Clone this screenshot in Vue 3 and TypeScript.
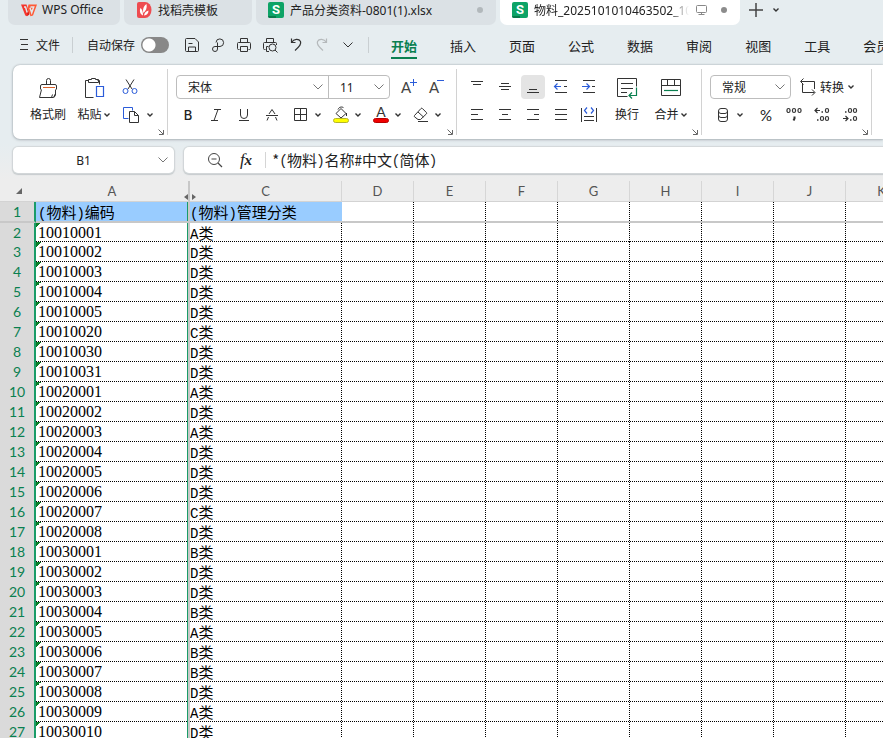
<script setup lang="ts">
import { h, ref } from 'vue'

interface IconDef {
  w: number
  h: number
  body: string
}

const icons: Record<string, IconDef> = {
  wps: {
    w: 18,
    h: 14,
    body: '<path d="M1 1.500h5.500l3 9.500L7 13.200 5.300 12.500Z" fill="#f5352c" stroke="none"/><path d="M7 4.500 9.200 11.500 7.500 13Z" fill="#d81e18" stroke="none"/><path d="M8.500 1.500H17L13 12.500l-2.500.7L7.500 5.500" fill="#ff5a36" stroke="none"/><path d="M4 4h1.500l1.700 5.500M10.500 4h3.200l-2 5.800-1.700-5" stroke="#e2e7ea" stroke-width="1.500"/>',
  },
  docer: {
    w: 16,
    h: 16,
    body: '<path d="M3 0h6a6.500 8 0 0 1 0 16H3a2 2 0 0 1-2-2V2a2 2 0 0 1 2-2Z" fill="#ee4b50" stroke="none"/><path d="M7 13.500C3.500 12 3.500 8 4.500 6c1.800 1.500 2.500 4 2.500 7.500ZM7.300 11C6.500 7 8 3.500 10.500 2c.8 4-.5 7-3.200 9ZM8 13.500c.3-2.500 2-4.500 4.500-5 0 3-1.500 4.800-4.500 5Z" fill="#fff" stroke="none"/>',
  },
  sheet: {
    w: 16,
    h: 16,
    body: '<rect width="16" height="16" rx="2" fill="#0da366" stroke="none"/><path d="M0 14h8v2H2a2 2 0 0 1-2-2Z" fill="#087a4b" stroke="none"/><text x="8" y="12" text-anchor="middle" font-family="Roboto, sans-serif" font-weight="700" font-size="13" fill="#fff" stroke="none">S</text>',
  },
  monitor: { w: 14, h: 12, body: '<rect x="1.500" y="1.500" width="10" height="7" rx="1" stroke="#888"/><path d="M6.500 8.500v2M3.500 10.500h6" stroke="#888"/>' },
  plus: { w: 16, h: 16, body: '<path d="M8 1v14M1 8h14" stroke="#444" stroke-width="1.500"/>' },
  chevron: { w: 8, h: 6, body: '<path d="m1.500 1.500 2.500 2.500 2.500-2.500" stroke="#333" stroke-width="1.400"/>' },
  chevronWide: { w: 10, h: 6, body: '<path d="m.5.5 4.500 4.500L9.500.5" stroke="#777"/>' },
  chevronDark: { w: 10, h: 6, body: '<path d="m.5.5 4.500 4.500L9.500.5" stroke="#333"/>' },
  menu: { w: 12, h: 12, body: '<path d="M2 .5h8M3 5.500h7M2 10.500h8" stroke="#333"/>' },
  save: { w: 16, h: 16, body: '<path d="M2.500 1.500h8.500l3.500 3.500v8.500a1 1 0 0 1-1 1h-11a1 1 0 0 1-1-1v-11a1 1 0 0 1 1-1ZM4.500 14.500v-4.500h7v4.500M4.500 6.500h4" />' },
  pdf: { w: 16, h: 16, body: '<path d="M6 5.500a3.800 3.800 0 1 1 4 4H5a2.500 2.500 0 1 0 2.500 2.500V5.500"/>' },
  print: { w: 16, h: 16, body: '<path d="M4.500 5.500v-4h7v4M3.500 12.500h-1a1 1 0 0 1-1-1v-5a1 1 0 0 1 1-1h11a1 1 0 0 1 1 1v5a1 1 0 0 1-1 1h-1M4.500 9.500h7v5h-7Z"/>' },
  preview: { w: 16, h: 16, body: '<path d="M4.500 5.500v-4h7v4M3.500 12.500h-1a1 1 0 0 1-1-1v-5a1 1 0 0 1 1-1h11a1 1 0 0 1 1 1V8M4.500 9.500V14.500h2.500M4.500 9.500h2"/><circle cx="10.500" cy="10.500" r="3.500"/><path d="m13 13 2.500 2.500"/>' },
  undo: { w: 16, h: 16, body: '<path d="M3.500 1.500v4h4M3.500 5.500C6 1.500 11 1.500 12.500 4.500c1 2.500-.5 4.500-5.500 9" stroke-width="1.200"/>' },
  redo: { w: 16, h: 16, body: '<path d="M12.500 1.500v4h-4M12.500 5.500C10 1.500 5 1.500 3.500 4.500c-1 2.500.5 4.500 5.500 9" stroke="#b5b9bb" stroke-width="1.200"/>' },
  painter: { w: 20, h: 22, body: '<path d="M8.500 7.500V3.500a2 2 0 0 1 4 0v4M2.500 12.500V9a1.500 1.500 0 0 1 1.500-1.500h13A1.500 1.500 0 0 1 18.500 9v3.500M3.500 12.500 1.500 20.500h14l2-4M17.500 12.500v5.500l-1.500 2.500M13.500 20.500l1-3"/><path d="M5 10.500h12" stroke="#d9622b"/>' },
  paste: { w: 22, h: 22, body: '<path d="M5.500 3.500h-3v17h8M14.500 3.500h2v4M5.500 5.500v-3h3v-1h4v1h3v3Z"/><path d="M13.500 9.500h7v10h-7Z" stroke="#2b5cd9" stroke-width="1.200"/>' },
  cut: { w: 18, h: 18, body: '<path d="M5 1.500 11 11M13 1.500 7 11"/><circle cx="4.500" cy="13" r="2.500" stroke="#2b5cd9"/><circle cx="13.500" cy="13" r="2.500" stroke="#2b5cd9"/>' },
  copy: { w: 18, h: 18, body: '<path d="M6.500 12.500h-5v-11h9v3" stroke="#2b5cd9"/><path d="M7.500 5.500h5l4 4v7h-9ZM12.500 5.500v4h4"/>' },
  growFont: { w: 18, h: 18, body: '<text x="1" y="15" font-family="Lato, sans-serif" font-size="15" fill="#444" stroke="none">A</text><path d="M13.500 1v7M10 4.500h7" stroke="#2b5cd9"/>' },
  shrinkFont: { w: 18, h: 18, body: '<text x="1" y="15" font-family="Lato, sans-serif" font-size="15" fill="#444" stroke="none">A</text><path d="M9 2.500h7" stroke="#2b5cd9"/>' },
  italic: { w: 16, h: 16, body: '<path d="M6 2.500h7M3 13.500h7M10 2.500 6 13.500"/>' },
  underline: { w: 16, h: 16, body: '<path d="M4.500 2v6a3.500 3.500 0 0 0 7 0V2M3 13.500h10"/>' },
  strike: { w: 16, h: 16, body: '<path d="M5 7 8 2.500 11 7M2 8.500h12M4.500 10 3 13.500M11.500 10l1.500 3.500"/>' },
  borders: { w: 16, h: 16, body: '<path d="M1.500 1.500h12v12h-12ZM7.500 1.500v12M1.500 7.500h12"/>' },
  fill: { w: 18, h: 18, body: '<path d="m4 7.500 5-5 5 5-5 4.500ZM6 3.500C7 .5 11 .5 11.500 2M14.500 7v3"/><rect x="1.500" y="12.500" width="15" height="4" rx="2" fill="#ff0" stroke="#b5b52a"/>' },
  fontColor: { w: 18, h: 18, body: '<text x="9" y="11" text-anchor="middle" font-family="Lato, sans-serif" font-size="14" fill="#333" stroke="none">A</text><rect x="1.500" y="12.500" width="15" height="4" rx="2" fill="#f00000" stroke="#b80000"/>' },
  eraser: { w: 18, h: 18, body: '<path d="M2.500 9.500 9 2.500a1 1 0 0 1 1.400 0l4 4a1 1 0 0 1 0 1.400L8.500 13.500H6L2.500 10.800a1 1 0 0 1 0-1.300ZM6 6l5.500 5M6 15.500h10"/>' },
  alignTop: { w: 16, h: 16, body: '<path d="M2 2.500h12M4 5.500h8" stroke-width="1.100"/>' },
  alignMiddle: { w: 16, h: 16, body: '<path d="M4 4.500h8M2 7.500h12M4 10.500h8" stroke-width="1.100"/>' },
  alignBottom: { w: 16, h: 16, body: '<path d="M4 10.500h8M2 13.500h12" stroke-width="1.100"/>' },
  outdent: { w: 16, h: 16, body: '<path d="M2 1.500h12M11 7.500h3M2 13.500h12"/><path d="M8 7.500H1.500M4.500 4.500l-3 3 3 3" stroke="#2b5cd9" stroke-width="1.200"/>' },
  indent: { w: 16, h: 16, body: '<path d="M2 1.500h12M11 7.500h3M2 13.500h12"/><path d="M1 7.500h7M5.500 4.500l3 3-3 3" stroke="#2b5cd9" stroke-width="1.200"/>' },
  alignLeft: { w: 16, h: 16, body: '<path d="M2 2.500h12M2 7.500h7M2 12.500h12"/>' },
  alignCenter: { w: 16, h: 16, body: '<path d="M2 2.500h12M5 7.500h6M2 12.500h12"/>' },
  alignRight: { w: 16, h: 16, body: '<path d="M2 2.500h12M9 7.500h5M2 12.500h12"/>' },
  justify: { w: 16, h: 16, body: '<path d="M2 2.500h12M2 7.500h12M2 12.500h12"/>' },
  distribute: { w: 18, h: 18, body: '<path d="M1.500 2v14M16.500 2v14M4 10.500h10M4 14.500h10"/><path d="m7 1.500-2.500 3 2.500 3M11 1.500l2.500 3-2.500 3" stroke="#2b5cd9" stroke-width="1.200"/>' },
  wrap: { w: 22, h: 22, body: '<path d="M20.500 9.500v-8h-19v18h10M5 6.500h12M5 11.500h12M5 15.500h6"/><path d="M20.500 10.500v8h-7M16 15.500l-3 3 3 3" stroke="#0a8050" stroke-width="1.200"/>' },
  merge: { w: 22, h: 22, body: '<path d="M1.500 2.500h19v16h-19ZM1.500 8.500h19M7.500 2.500v6M14.500 2.500v6"/><path d="M4 13.500h14" stroke="#0a8050" stroke-width="1.200"/>' },
  convert: { w: 18, h: 18, body: '<path d="M3.500 6v8.500h12M13 11.500l3 3-3 3M15.500 11V3.500H2M4.500.5l-3 3 3 3"/>' },
  currency: { w: 14, h: 16, body: '<rect x="2.500" y="1.500" width="9" height="5" rx="2.500"/><path d="M2.500 4v4a2.500 2.500 0 0 0 2.500 2.500h4A2.500 2.500 0 0 0 11.500 8V4M2.500 8v4A2.500 2.500 0 0 0 5 14.500h4a2.500 2.500 0 0 0 2.500-2.500V8"/>' },
  thousands: { w: 18, h: 18, body: '<g stroke-width="1.200"><rect x="2" y="2.500" width="3" height="4" rx="1.500"/><rect x="7.500" y="2.500" width="3" height="4" rx="1.500"/><rect x="13" y="2.500" width="3" height="4" rx="1.500"/><path d="M9.500 10.500v2l-1 2" stroke-width="2"/></g>' },
  addDecimal: { w: 18, h: 18, body: '<g stroke-width="1.200"><path d="M7 4.500H2M4.500 2l-2.500 2.500L4.500 7"/><path d="M8.500 6h1.500M4 14h1.500" stroke-width="1.500"/><rect x="12.500" y="2.500" width="3" height="4" rx="1.500"/><rect x="7.500" y="10.500" width="3" height="4" rx="1.500"/><rect x="12.500" y="10.500" width="3" height="4" rx="1.500"/></g>' },
  dropDecimal: { w: 18, h: 18, body: '<g stroke-width="1.200"><path d="M2 12.500h5M4.500 10l2.500 2.500L4.500 15"/><path d="M4 6h1.500M9 14h1.500" stroke-width="1.500"/><rect x="7.500" y="2.500" width="3" height="4" rx="1.500"/><rect x="12.500" y="2.500" width="3" height="4" rx="1.500"/><rect x="12.500" y="10.500" width="3" height="4" rx="1.500"/></g>' },
  launcher: { w: 6, h: 6, body: '<path d="M.5.5l4.500 4.500M5.500 1v4.500H1" stroke="#666"/>' },
  zoomOut: { w: 16, h: 16, body: '<circle cx="7" cy="7" r="5.500" stroke="#444"/><path d="M4.500 7h5M11 11l4 4" stroke="#444" stroke-width="1.200"/>' },
  corner: { w: 6, h: 6, body: '<path d="M6 0v6H0Z" fill="#666" stroke="none"/>' },
  resize: { w: 12, h: 6, body: '<path d="M4 0v6L0 3ZM8 0v6l4-3Z" fill="#666" stroke="none"/>' },
}

const Icon = (props: { name: string }) => {
  const d = icons[props.name]
  return h('svg', {
    class: 'icon',
    width: d.w,
    height: d.h,
    viewBox: `0 0 ${d.w} ${d.h}`,
    fill: 'none',
    stroke: '#333',
    'aria-hidden': 'true',
    innerHTML: d.body,
  })
}
Icon.props = ['name']

const quickActions = [
  { icon: 'save', label: '保存' },
  { icon: 'pdf', label: '输出为PDF' },
  { icon: 'print', label: '打印' },
  { icon: 'preview', label: '打印预览' },
  { icon: 'undo', label: '撤销' },
  { icon: 'redo', label: '恢复' },
  { icon: 'chevronDark', label: '更多' },
]
const menus = ['开始', '插入', '页面', '公式', '数据', '审阅', '视图', '工具', '会员']
const activeMenu = ref('开始')
const autoSave = ref(false)

const fontSplits = [
  { icon: 'borders', label: '边框' },
  { icon: 'fill', label: '填充颜色' },
  { icon: 'fontColor', label: '字体颜色' },
  { icon: 'eraser', label: '清除' },
]
const verticalAligns = [
  { icon: 'alignTop', label: '顶端对齐' },
  { icon: 'alignMiddle', label: '垂直居中' },
  { icon: 'alignBottom', label: '底端对齐' },
  { icon: 'outdent', label: '减少缩进' },
  { icon: 'indent', label: '增加缩进' },
]
const horizontalAligns = [
  { icon: 'alignLeft', label: '左对齐' },
  { icon: 'alignCenter', label: '水平居中' },
  { icon: 'alignRight', label: '右对齐' },
  { icon: 'justify', label: '两端对齐' },
  { icon: 'distribute', label: '分散对齐' },
]

const fontName = ref('宋体')
const fontSize = ref('11')
const numberFormat = ref('常规')
const cellName = ref('B1')
const formula = ref('*(物料)名称#中文(简体)')

const emptyColumns = ['D', 'E', 'F', 'G', 'H', 'I', 'J', 'K']
const records: [string, string][] = [
  ['10010001', 'A'], ['10010002', 'D'], ['10010003', 'D'], ['10010004', 'D'],
  ['10010005', 'D'], ['10010020', 'C'], ['10010030', 'D'], ['10010031', 'D'],
  ['10020001', 'A'], ['10020002', 'D'], ['10020003', 'A'], ['10020004', 'D'],
  ['10020005', 'D'], ['10020006', 'D'], ['10020007', 'C'], ['10020008', 'D'],
  ['10030001', 'B'], ['10030002', 'D'], ['10030003', 'D'], ['10030004', 'B'],
  ['10030005', 'A'], ['10030006', 'B'], ['10030007', 'B'], ['10030008', 'D'],
  ['10030009', 'A'], ['10030010', 'D'],
]
</script>

<template>
  <div class="app">
    <nav class="tabs" aria-label="文档">
      <button class="tab tab-home"><Icon name="wps" /><span>WPS Office</span></button>
      <button class="tab tab-docer"><Icon name="docer" /><span>找稻壳模板</span></button>
      <button class="tab tab-doc">
        <Icon name="sheet" /><span class="tab-title">产品分类资料-0801(1).xlsx</span><i class="dot"></i>
      </button>
      <button class="tab tab-doc active">
        <Icon name="sheet" /><span class="tab-title fade">物料_2025101010463502_10</span><Icon name="monitor" /><i class="dot"></i>
      </button>
      <button class="new-tab" aria-label="新建"><Icon name="plus" /></button>
      <button class="tab-list" aria-label="标签列表"><Icon name="chevron" /></button>
    </nav>

    <div class="menubar">
      <button class="file"><Icon name="menu" />文件</button>
      <span class="rule"></span>
      <label class="autosave">自动保存<input v-model="autoSave" type="checkbox" role="switch" class="switch" /></label>
      <div class="quick">
        <button v-for="a in quickActions" :key="a.icon" :aria-label="a.label"><Icon :name="a.icon" /></button>
      </div>
      <span class="rule"></span>
      <nav class="menus" aria-label="功能区">
        <button v-for="m in menus" :key="m" :class="{ current: m === activeMenu }" @click="activeMenu = m">{{ m }}</button>
      </nav>
    </div>

    <section class="ribbon">
      <div class="group clipboard">
        <button class="big painter"><Icon name="painter" /><span>格式刷</span></button>
        <button class="big paste"><Icon name="paste" /><span>粘贴<Icon name="chevron" /></span></button>
        <div class="stack">
          <button class="tool" aria-label="剪切"><Icon name="cut" /></button>
          <button class="split" aria-label="复制"><span class="face"><Icon name="copy" /></span><Icon name="chevron" /></button>
        </div>
        <button class="launcher" aria-label="剪贴板设置"><Icon name="launcher" /></button>
      </div>

      <div class="group font">
        <div class="stack">
          <div class="line">
            <div class="combo">
              <span class="pick name">
                <select v-model="fontName" aria-label="字体"><option>宋体</option></select><Icon name="chevronWide" />
              </span>
              <span class="pick size">
                <select v-model="fontSize" aria-label="字号"><option>11</option></select><Icon name="chevronWide" />
              </span>
            </div>
            <button class="tool" aria-label="增大字号"><Icon name="growFont" /></button>
            <button class="tool" aria-label="减小字号"><Icon name="shrinkFont" /></button>
          </div>
          <div class="line styles">
            <button class="tool bold" aria-label="加粗">B</button>
            <button class="tool" aria-label="倾斜"><Icon name="italic" /></button>
            <button class="tool" aria-label="下划线"><Icon name="underline" /></button>
            <button class="tool" aria-label="删除线"><Icon name="strike" /></button>
            <div class="line splits">
              <button v-for="s in fontSplits" :key="s.icon" class="split" :aria-label="s.label">
                <span class="face"><Icon :name="s.icon" /></span><Icon name="chevron" />
              </button>
            </div>
          </div>
        </div>
        <button class="launcher" aria-label="字体设置"><Icon name="launcher" /></button>
      </div>

      <div class="group align">
        <div class="stack">
          <div class="line">
            <button v-for="a in verticalAligns" :key="a.icon" class="tool" :class="{ pressed: a.icon === 'alignBottom' }" :aria-label="a.label">
              <Icon :name="a.icon" />
            </button>
          </div>
          <div class="line">
            <button v-for="a in horizontalAligns" :key="a.icon" class="tool" :aria-label="a.label"><Icon :name="a.icon" /></button>
          </div>
        </div>
        <button class="big wrap"><Icon name="wrap" /><span>换行</span></button>
        <button class="big merge"><Icon name="merge" /><span>合并<Icon name="chevron" /></span></button>
        <button class="launcher" aria-label="对齐设置"><Icon name="launcher" /></button>
      </div>

      <div class="group number">
        <div class="stack">
          <div class="line">
            <div class="combo format">
              <span class="pick">
                <select v-model="numberFormat" aria-label="数字格式"><option>常规</option></select><Icon name="chevronWide" />
              </span>
            </div>
            <button class="convert"><Icon name="convert" />转换<Icon name="chevron" /></button>
          </div>
          <div class="line">
            <button class="split" aria-label="货币"><span class="face"><Icon name="currency" /></span><Icon name="chevron" /></button>
            <div class="line numbers">
              <button class="tool percent" aria-label="百分比">%</button>
              <button class="tool" aria-label="千位分隔"><Icon name="thousands" /></button>
              <button class="tool" aria-label="增加小数位"><Icon name="addDecimal" /></button>
              <button class="tool" aria-label="减少小数位"><Icon name="dropDecimal" /></button>
            </div>
          </div>
        </div>
        <button class="launcher" aria-label="数字设置"><Icon name="launcher" /></button>
      </div>
    </section>

    <div class="formula-row">
      <div class="namebox">
        <input v-model="cellName" aria-label="名称框" /><button aria-label="名称列表"><Icon name="chevronWide" /></button>
      </div>
      <div class="formula">
        <button aria-label="缩小"><Icon name="zoomOut" /></button>
        <button class="fx" aria-label="插入函数">f<b>x</b></button>
        <input v-model="formula" aria-label="编辑栏" />
      </div>
    </div>

    <div class="sheet">
      <table>
        <colgroup>
          <col class="w-head" /><col class="w-a" /><col class="w-c" />
          <col v-for="c in emptyColumns" :key="c" class="w-x" />
        </colgroup>
        <thead>
          <tr>
            <th class="corner"><Icon name="corner" /></th>
            <th class="col-a">A<span class="handle"><Icon name="resize" /></span></th>
            <th>C</th>
            <th v-for="c in emptyColumns" :key="c">{{ c }}</th>
          </tr>
        </thead>
        <tbody>
          <tr class="titles">
            <th scope="row">1</th>
            <td class="a"><span class="half">(</span>物料<span class="half">)</span>编码</td>
            <td class="c"><span class="half">(</span>物料<span class="half">)</span>管理分类</td>
            <td v-for="c in emptyColumns" :key="c" class="x"></td>
          </tr>
          <tr v-for="(r, i) in records" :key="r[0]" :class="{ first: i === 0 }">
            <th scope="row">{{ i + 2 }}</th>
            <td class="a code">{{ r[0] }}</td>
            <td class="c"><span class="half">{{ r[1] }}</span>类</td>
            <td v-for="c in emptyColumns" :key="c" class="x"></td>
          </tr>
        </tbody>
      </table>
    </div>
  </div>
</template>

<style>
body {
  background: #e6edf0;
  overflow: hidden;
}
.icon {
  display: block;
  flex: none;
}
</style>

<style scoped>
.app {
  height: 100vh;
  overflow: hidden;
  display: flex;
  flex-direction: column;
  font-family: "Noto Sans", "Noto Sans CJK SC", sans-serif;
  font-size: 12px;
  color: #222;
  background: linear-gradient(#e6edf0 0, #e6edf0 144px, #ededed 180px);
}
button,
input,
select {
  font: inherit;
  color: inherit;
  border: 0;
  background: none;
  padding: 0;
  margin: 0;
  min-width: 0;
  outline: none;
  appearance: none;
}
button {
  display: flex;
  align-items: center;
  justify-content: center;
  white-space: nowrap;
}

/* document tabs */
.tabs {
  display: flex;
  flex: none;
  gap: 4px;
  height: 25px;
  padding-left: 8px;
}
.tab {
  flex: none;
  justify-content: flex-start;
  gap: 6px;
  padding: 0 12px 6px;
  background: #dbe1e5;
  border-radius: 0 0 7px 7px;
}
.tab-home {
  width: 112px;
  gap: 4px;
}
.tab-docer {
  width: 128px;
}
.tab-doc {
  width: 240px;
}
.tab-title {
  flex: 1;
  text-align: left;
  overflow: hidden;
}
.tab.active {
  background: #fff;
}
.fade {
  mask-image: linear-gradient(90deg, #000 88%, transparent);
}
.dot {
  width: 6px;
  height: 6px;
  margin-right: 1px;
  border-radius: 50%;
  background: #b2b8bb;
}
.active .dot {
  margin-left: 6px;
  background: #8c8c8c;
}
.new-tab {
  padding: 0 4px 5px;
}
.tab-list {
  padding-bottom: 5px;
}

/* menu bar */
.menubar {
  display: flex;
  flex: none;
  align-items: center;
  height: 40px;
  padding-left: 18px;
  white-space: nowrap;
}
.menubar > * {
  flex: none;
}
.file {
  gap: 6px;
}
.rule {
  width: 1px;
  height: 16px;
  margin: 0 14px 0 12px;
  background: #c9cfd2;
}
.autosave {
  display: flex;
  align-items: center;
  gap: 6px;
}
.switch {
  width: 28px;
  height: 16px;
  border-radius: 8px;
  background: radial-gradient(circle at 8px 8px, #fff 6px, #888 7px);
}
.switch:checked {
  background: radial-gradient(circle at 20px 8px, #fff 6px, #0a8050 7px);
}
.quick {
  display: flex;
  margin-left: 10px;
}
.quick button {
  width: 26px;
  height: 26px;
}
.quick + .rule {
  margin: 0 22px 0 7px;
}
.menus {
  display: flex;
  gap: 33px;
  font-size: 13px;
}
.menus button {
  flex: none;
  height: 28px;
  border-bottom: 2px solid transparent;
  border-top: 2px solid transparent;
}
.menus .current {
  color: #0a8050;
  font-weight: 700;
  border-bottom-color: #0a8050;
}

/* ribbon */
.ribbon {
  display: flex;
  flex: none;
  height: 74px;
  margin-left: 13px;
  background: #fff;
  border-radius: 7px 0 0 7px;
  box-shadow: 0 0 2px #9aa3a8, 0 1px 3px #b8bfc3;
}
.group {
  position: relative;
  display: flex;
  flex: none;
  padding-top: 8px;
}
.group::after {
  content: "";
  position: absolute;
  top: 4px;
  bottom: 4px;
  right: 0;
  width: 1px;
  background: #d2d2d2;
}
.clipboard {
  padding-left: 11px;
  padding-right: 12px;
}
.font {
  padding-left: 6px;
  padding-right: 6px;
}
.align {
  padding-left: 6px;
  padding-right: 11px;
  gap: 4px;
}
.number {
  padding-left: 8px;
  padding-right: 8px;
}
.launcher {
  position: absolute;
  right: 4px;
  bottom: 4px;
}
.stack {
  display: flex;
  flex-direction: column;
}
.line {
  display: flex;
  align-items: center;
  height: 28px;
}
.tool {
  width: 28px;
  height: 24px;
  border-radius: 4px;
}
.pressed {
  width: 24px;
  margin: 0 2px;
  background: #e4e4e4;
}
.split {
  justify-content: flex-start;
  width: 40px;
  height: 28px;
}
.face {
  display: flex;
  justify-content: center;
  width: 26px;
}
.splits,
.numbers {
  margin-left: 2px;
}
.big {
  flex-direction: column;
  justify-content: space-between;
  height: 56px;
  padding: 4px 0 5px;
  line-height: 18px;
}
.big span {
  display: flex;
  align-items: center;
  gap: 1px;
}
.painter {
  width: 48px;
}
.paste {
  width: 44px;
}
.wrap,
.merge {
  width: 40px;
}
.clipboard .tool,
.clipboard .split {
  height: 28px;
}
.clipboard .stack {
  width: 40px;
}
.clipboard .face {
  width: 30px;
}
.combo {
  display: flex;
  height: 24px;
  box-sizing: border-box;
  border: 1px solid #bdbdbd;
  border-radius: 4px;
}
.font .combo {
  width: 214px;
  margin: 0 5px 0 2px;
}
.pick {
  display: grid;
  align-items: center;
  flex: 1;
}
.pick > * {
  grid-area: 1 / 1;
}
.pick select {
  width: 100%;
  padding-left: 11px;
}
.pick .icon {
  justify-self: end;
  margin-right: 5px;
  pointer-events: none;
}
.pick.size {
  flex: none;
  width: 60px;
  border-left: 1px solid #bdbdbd;
}
.format {
  width: 81px;
}
.bold {
  font-family: Inter, sans-serif;
  font-size: 13px;
  font-weight: 500;
}
.percent {
  font-family: Lato, sans-serif;
  font-size: 15px;
}
.convert {
  gap: 3px;
  margin-left: 8px;
}

/* formula row */
.formula-row {
  display: flex;
  flex: none;
  gap: 10px;
  height: 26px;
  margin: 8px 0 8px 13px;
}
.namebox,
.formula {
  display: flex;
  align-items: center;
  background: #fff;
  border-radius: 5px;
  box-shadow: 0 0 1px 1px #d3d8da, 0 1px 1px 1px #c6cacc;
}
.namebox {
  width: 161px;
}
.namebox input {
  flex: 1;
  padding-left: 2px;
  text-align: center;
}
.namebox button {
  width: 22px;
}
.formula {
  flex: 1;
  padding-left: 23px;
  border-radius: 5px 0 0 5px;
}
.fx {
  width: 16px;
  margin: 0 11px 0 15px;
  font-family: "Liberation Serif", serif;
  font-style: italic;
  font-size: 17px;
}
.fx b {
  font-size: 15px;
}
.formula input {
  flex: 1;
  padding-left: 6px;
  height: 16px;
  line-height: 16px;
  border-left: 1px solid #d5d5d5;
  font-family: "Noto Sans Mono CJK SC", "Liberation Mono", "Noto Sans CJK SC", monospace;
  font-size: 15px;
}

/* grid */
.sheet {
  flex: 1;
  overflow: hidden;
}
table {
  width: 918px;
  table-layout: fixed;
  border-collapse: separate;
  border-spacing: 0;
}
.w-head {
  width: 36px;
}
.w-a {
  width: 154px;
}
.w-c {
  width: 152px;
}
.w-x {
  width: 72px;
}
th,
td {
  padding: 0;
  box-sizing: border-box;
}
th {
  font-family: Lato, "Noto Sans", sans-serif;
  font-weight: 400;
  font-size: 13px;
}
thead th {
  height: 21px;
  line-height: 20px;
  color: #555;
  background: #ededed;
  border-right: 1px solid #d6d6d6;
  border-bottom: 1px solid #d3d3d3;
}
thead .corner {
  border-right: 0;
}
.corner .icon {
  margin-left: 16px;
}
thead .col-a {
  position: relative;
  border-right: 2px solid #c8c8c8;
}
.handle {
  position: absolute;
  right: -8px;
  bottom: 1px;
  z-index: 1;
}
tbody th {
  height: 20px;
  line-height: 18px;
  color: #0a8050;
  font-size: 14px;
  background: #dadada;
  border-right: 2px solid #1a9c68;
}
td {
  overflow: hidden;
  white-space: nowrap;
  line-height: 18px;
  font-family: "Noto Sans CJK SC", sans-serif;
  font-size: 15px;
  color: #000;
  background:
    repeating-linear-gradient(90deg, #000 0 1px, transparent 1px 2px) left bottom / 100% 1px no-repeat,
    repeating-linear-gradient(#000 0 1px, transparent 1px 2px) right top / 1px 100% no-repeat,
    #fff;
}
.a {
  padding-left: 2px;
  border-right: 2px solid #c8c8c8;
  background:
    linear-gradient(#1a9c68, #1a9c68) right top / 1px 100% no-repeat,
    linear-gradient(135deg, #0a7d28 50%, transparent 50%) left top / 5px 5px no-repeat,
    repeating-linear-gradient(90deg, #000 0 1px, transparent 1px 2px) left bottom / 100% 1px no-repeat,
    #fff;
}
.code {
  font-family: "Liberation Serif", serif;
  font-size: 16px;
}
.half {
  font-family: "Liberation Mono", monospace;
  font-size: 14px;
  line-height: 0;
}
.titles th,
.titles td {
  height: 21px;
  border-bottom: 2px solid #c8c8c8;
}
.titles .x {
  background: repeating-linear-gradient(#000 0 1px, transparent 1px 2px) right top / 1px 100% no-repeat, #fff;
}
.titles .a {
  background: linear-gradient(#1a9c68, #1a9c68) right top / 1px 100% no-repeat, #9cf;
}
.titles .c {
  background: #9cf;
}
.first th,
.first td {
  height: 19px;
}
</style>
